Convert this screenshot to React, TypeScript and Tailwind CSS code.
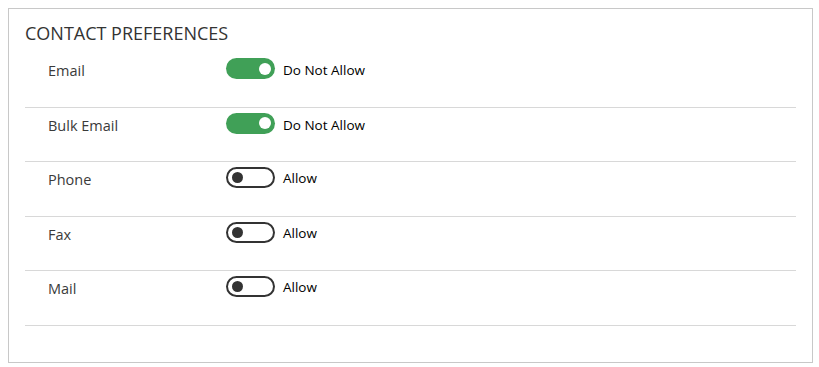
import React from 'react';

interface Pref {
  label: string;
  on: boolean;
}

const prefs: Pref[] = [
  { label: 'Email', on: true },
  { label: 'Bulk Email', on: true },
  { label: 'Phone', on: false },
  { label: 'Fax', on: false },
  { label: 'Mail', on: false },
];

function Toggle({ on }: { on: boolean }) {
  if (on) {
    return (
      <div className="flex h-[21px] w-[49px] items-center justify-end rounded-full bg-[#40a057] pr-[4px]">
        <div className="h-[12px] w-[12px] rounded-full bg-white" />
      </div>
    );
  }
  return (
    <div className="flex h-[21px] w-[49px] items-center rounded-full border-2 border-[#333333] bg-white pl-[4px]">
      <div className="h-[11px] w-[11px] rounded-full bg-[#333333]" />
    </div>
  );
}

export default function App() {
  return (
    <div className="bg-white p-2" style={{ fontFamily: '"Open Sans", "Noto Sans", sans-serif' }}>
      <div className="h-[355px] w-[805px] border border-[#c8c8c8] bg-white px-4">
        <div className="pt-[12px] pb-[8px] text-[18px] leading-[24px] text-[#333333]">CONTACT PREFERENCES</div>
        <div>
          {prefs.map((p) => (
            <div key={p.label} className="flex h-[54.5px] items-start border-b border-[#d8d8d8] pt-[5px] pr-[10px]">
              <div className="w-[201px] pl-[23px] pt-[2px] text-[14.5px] leading-[21px] text-[#3a3a3a]">{p.label}</div>
              <Toggle on={p.on} />
              <div className={`pl-[8px] text-[13.5px] leading-[21px] text-black ${p.on ? 'pt-[2px]' : 'pt-[1px]'}`}>
                {p.on ? 'Do Not Allow' : 'Allow'}
              </div>
            </div>
          ))}
        </div>
      </div>
    </div>
  );
}
